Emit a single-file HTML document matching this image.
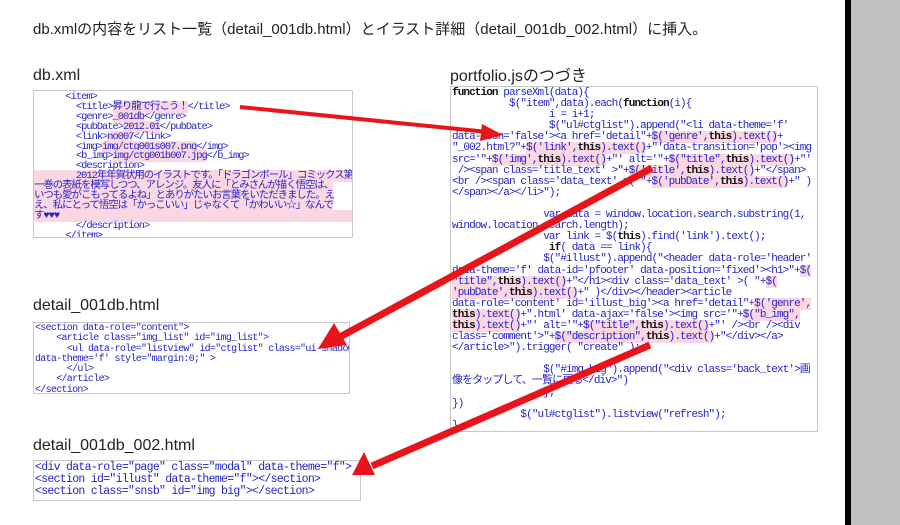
<!DOCTYPE html>
<html><head><meta charset="utf-8"><style>
body{margin:0;width:900px;height:525px;background:#fff;position:relative;overflow:hidden;font-family:"Liberation Sans","Noto Sans CJK JP",sans-serif;}
.t{position:absolute;color:#222;white-space:nowrap}
.box{position:absolute;border:1px solid #c8c8c8;background:#fff;overflow:hidden}
pre{margin:0;font-family:"Liberation Mono","Noto Sans CJK JP",monospace;color:#2424c8;white-space:pre;}
.k{color:#111;font-weight:bold}
.h{background:#fbd6e3}
</style></head><body>
<div class="t" style="left:33px;top:18px;font-size:15px">db.xmlの内容をリスト一覧（detail_001db.html）とイラスト詳細（detail_001db_002.html）に挿入。</div>
<div style="position:absolute;left:845px;top:0;width:6px;height:525px;background:#000"></div>
<div style="position:absolute;left:851px;top:0;width:49px;height:525px;background:#c0c0c0"></div>

<div class="t" style="left:33px;top:67px;font-size:16px">db.xml</div>
<div class="box" style="left:33px;top:90px;width:318px;height:146px">
<pre style="font-size:10.4px;line-height:9.9px;padding:2px 0 0 0;letter-spacing:-1px">      &lt;item&gt;
        &lt;title&gt;<span class="h">昇り龍で行こう！</span>&lt;/title&gt;
        &lt;genre&gt;<span class="h">_001db</span>&lt;/genre&gt;
        &lt;pubDate&gt;<span class="h">2012.01</span>&lt;/pubDate&gt;
        &lt;link&gt;<span class="h">no007</span>&lt;/link&gt;
        &lt;img&gt;<span class="h">img/ctg001s007.png</span>&lt;/img&gt;
        &lt;b_img&gt;<span class="h">img/ctg001b007.jpg</span>&lt;/b_img&gt;
        &lt;description&gt;
<span class="h">        2012年年賀状用のイラストです。「ドラゴンボール」コミックス第
一巻の表紙を模写しつつ、アレンジ。友人に「とみさんが描く悟空は、
いつも愛がこもってるよね」とありがたいお言葉をいただきました。え
え、私にとって悟空は「かっこいい」じゃなくて「かわいい☆」なんで
す♥♥♥                                                        </span>
        &lt;/description&gt;
      &lt;/item&gt;</pre></div>

<div class="t" style="left:33px;top:297px;font-size:16px">detail_001db.html</div>
<div class="box" style="left:33px;top:322px;width:315px;height:70px">
<pre style="font-size:10px;line-height:10.3px;padding:1px 0 0 1px;letter-spacing:-0.7px">&lt;section data-role="content"&gt;
    &lt;article class="img_list" id="img_list"&gt;
      &lt;ul data-role="listview" id="ctglist" class="ui-shadow"
data-theme='f' style="margin:0;" &gt;
      &lt;/ul&gt;
    &lt;/article&gt;
&lt;/section&gt;</pre></div>

<div class="t" style="left:33px;top:437px;font-size:16px">detail_001db_002.html</div>
<div class="box" style="left:33px;top:460px;width:326px;height:39px">
<pre style="font-size:11.5px;line-height:12px;padding:1px 0 0 1px;letter-spacing:-0.7px">&lt;div data-role="page" class="modal" data-theme="f"&gt;
&lt;section id="illust" data-theme="f"&gt;&lt;/section&gt;
&lt;section class="snsb" id="img big"&gt;&lt;/section&gt;</pre></div>

<div class="t" style="left:450px;top:62px;font-size:16px">portfolio.jsのつづき</div>
<div class="box" style="left:450px;top:86px;width:366px;height:344px">
<pre style="font-size:11px;line-height:11.1px;padding:1px 0 0 1px;letter-spacing:-0.9px"><span class="k">function</span> parseXml(data){
          $("item",data).each(<span class="k">function</span>(i){
                 i = i+1;
                 $("ul#ctglist").append("&lt;li data-theme='f'
data-icon='false'&gt;&lt;a href='detail"+<span class="h">$('genre',<span class="k">this</span>).text()</span>+
"_002.html?"+<span class="h">$('link',<span class="k">this</span>).text()</span>+"'data-transition='pop'&gt;&lt;img
src='"+<span class="h">$('img',<span class="k">this</span>).text()</span>+"' alt='"+<span class="h">$("title",<span class="k">this</span>).text()</span>+"'
 /&gt;&lt;span class='title_text' &gt;"+<span class="h">$('title',<span class="k">this</span>).text()</span>+"&lt;/span&gt;
&lt;br /&gt;&lt;span class='data_text' &gt;( "+<span class="h">$('pubDate',<span class="k">this</span>).text()</span>+" )
&lt;/span&gt;&lt;/a&gt;&lt;/li&gt;");

                var data = window.location.search.substring(1,
window.location.search.length);
                var link = $(<span class="k">this</span>).find('link').text();
                 <span class="k">if</span>( data == link){
                $("#illust").append("&lt;header data-role='header'
data-theme='f' data-id='pfooter' data-position='fixed'&gt;&lt;h1&gt;"+<span class="h">$(
"title",<span class="k">this</span>).text()</span>+"&lt;/h1&gt;&lt;div class='data_text' &gt;( "+<span class="h">$(
'pubDate',<span class="k">this</span>).text()</span>+" )&lt;/div&gt;&lt;/header&gt;&lt;article
data-role='content' id='illust_big'&gt;&lt;a href='detail"+<span class="h">$('genre',
<span class="k">this</span>).text()</span>+".html' data-ajax='false'&gt;&lt;img src='"+<span class="h">$("b_img",
<span class="k">this</span>).text()</span>+"' alt='"+<span class="h">$("title",<span class="k">this</span>).text()</span>+"' /&gt;&lt;br /&gt;&lt;div
class='comment'&gt;"+<span class="h">$("description",<span class="k">this</span>).text()</span>+"&lt;/div&gt;&lt;/a&gt;
&lt;/article&gt;").trigger( "create" );

                $("#img_big").append("&lt;div class='back_text'&gt;画
像をタップして、一覧に戻る&lt;/div&gt;")
                };
})
            $("ul#ctglist").listview("refresh");
}</pre></div>

<svg style="position:absolute;left:0;top:0" width="900" height="525">
<g stroke="#e8141a" fill="#e8141a">
<line x1="240" y1="107" x2="488" y2="132" stroke-width="4"/>
<polygon points="503,135 482,124 480,141" stroke="none"/>
<line x1="652" y1="168" x2="338" y2="338" stroke-width="7"/>
<polygon points="318,349 334,323 347,345" stroke="none"/>
<line x1="650" y1="345" x2="372" y2="466" stroke-width="7"/>
<polygon points="352,475 364,452 375,475" stroke="none"/>
</g></svg>
</body></html>
